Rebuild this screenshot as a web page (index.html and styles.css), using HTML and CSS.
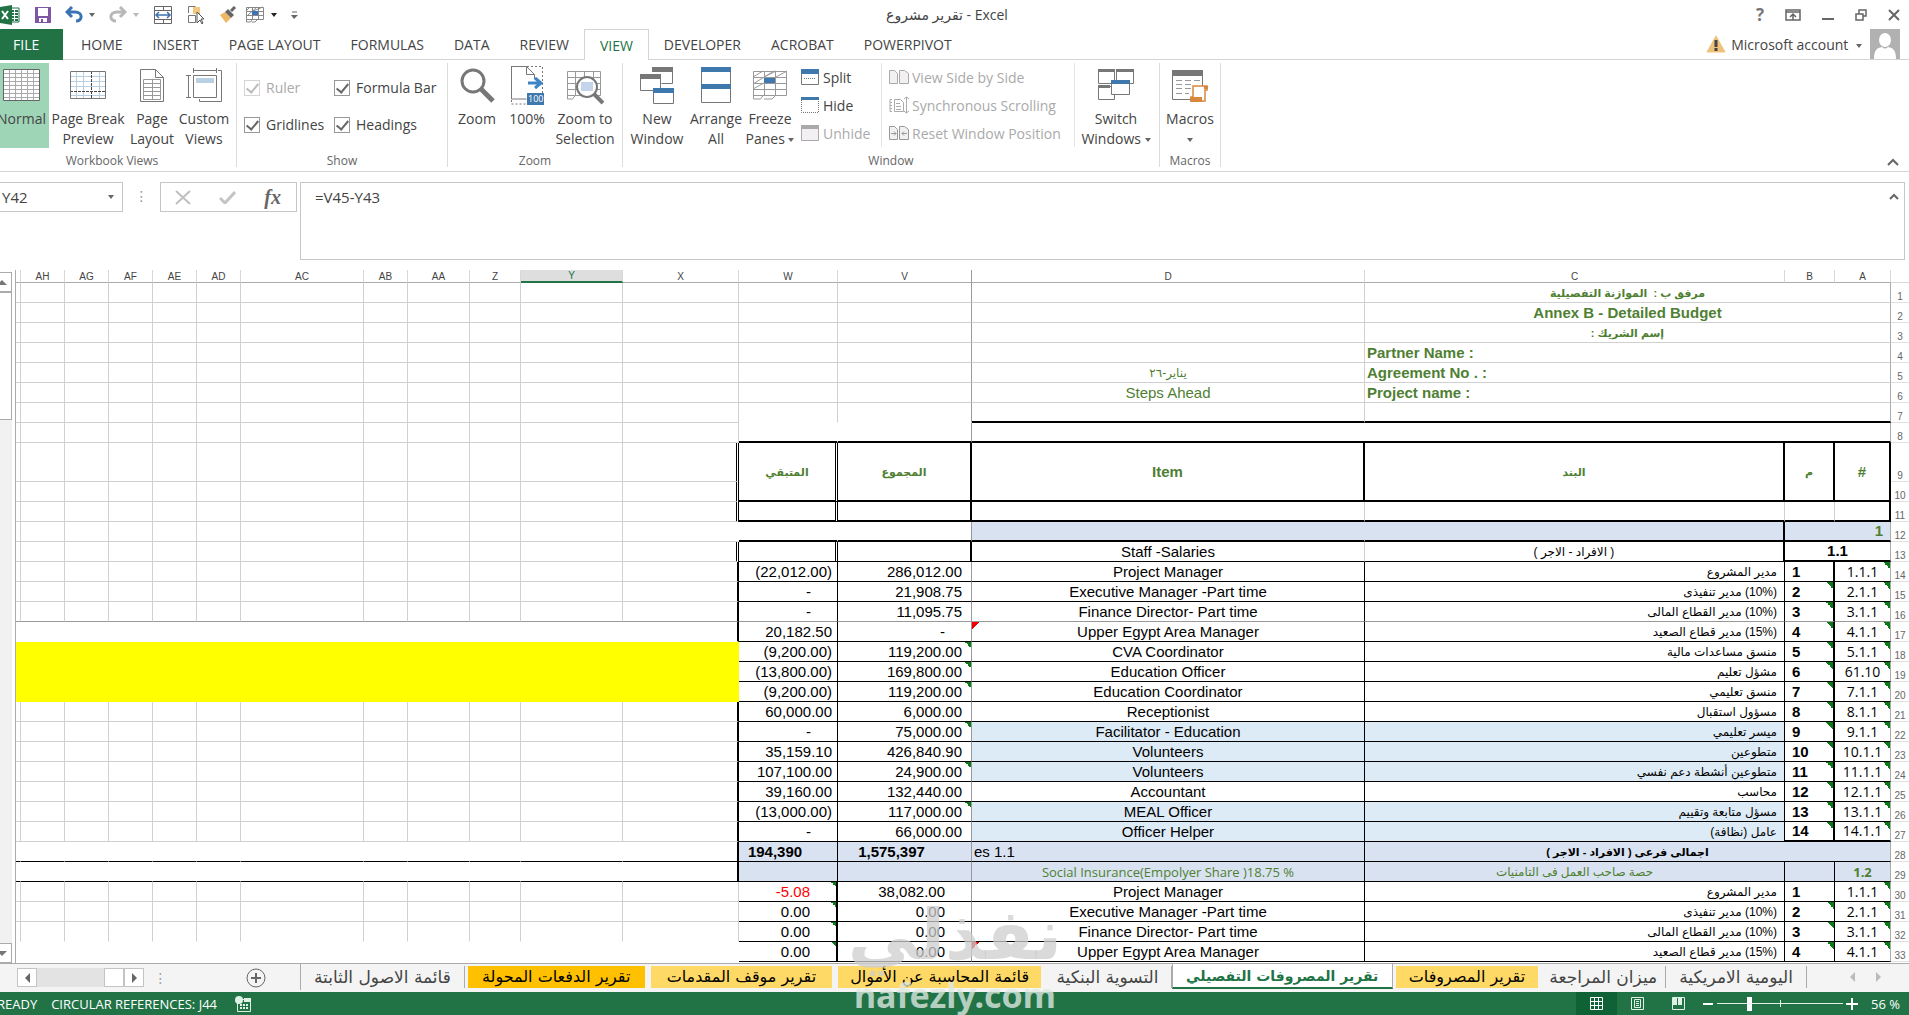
FILE: index.html
```html
<!DOCTYPE html>
<html lang="en">
<head>
  <meta charset="UTF-8" />
  <meta name="viewport" content="width=device-width, initial-scale=1.0"/>
  <title>تقرير مشروع - Excel</title>
  <link rel="stylesheet" href="styles.css">
</head>
<body>
  <header class="titlebar">
    <div class="quick">
      <svg class="app-logo" width="21" height="20" viewBox="0 0 21 20"><path d="M9 3h10v14H9z" fill="#fff" stroke="#217346"/><path d="M12 6h2m1 0h3M12 9h2m1 0h3M12 12h2m1 0h3M12 15h2m1 0h3" stroke="#217346" stroke-width="2"/><path d="M0 2l12-2v20L0 18z" fill="#217346"/><path d="M2 6l6 8M8 6l-6 8" stroke="#fff" stroke-width="2"/></svg>
      <button class="q-btn save" aria-label="Save"><svg width="16" height="16" viewBox="0 0 16 16"><path d="M0 0h16v16H0z" fill="#7d57a4"/><path d="M3 1h10v8H3zM4 11h8v4H8v-3H6v3H4z" fill="#fff"/></svg></button>
      <button class="q-btn undo" aria-label="Undo"><svg width="18" height="17" viewBox="0 0 18 17"><path d="M2 6h8c8 0 8 9 1 9M7 1L2 6l5 5" fill="none" stroke="#3b73b5" stroke-width="3"/></svg><i class="caret"></i></button>
      <button class="q-btn redo" aria-label="Redo"><svg width="18" height="17" viewBox="0 0 18 17"><path d="M16 6H8c-8 0-8 9-1 9M11 1l5 5-5 5" fill="none" stroke="#b8b8b8" stroke-width="3"/></svg><i class="caret light"></i></button>
      <button class="q-btn" aria-label="Merge cells"><svg width="20" height="20" viewBox="0 0 20 20"><path d="M1.500 1.500h17v17h-17zM1.500 5.500h17M1.500 14.500h17M10.500 1v4M10.500 15v4" fill="none" stroke="#666"/><path d="M3 10h14M6 7l-3 3 3 3M14 7l3 3-3 3" fill="none" stroke="#3b73b5" stroke-width="1.500"/></svg></button>
      <button class="q-btn" aria-label="Select objects"><svg width="18" height="20" viewBox="0 0 18 20"><path d="M6 2h7v7H6z" fill="#f3c77d"/><path d="M1.500 8V1.500h7M1.500 10.500h7v7h-7zM10 9h3" fill="none" stroke="#777"/><path d="M10 7v11l3-3 2 4 1-1-2-4h3z" fill="#fff" stroke="#555"/></svg></button>
      <button class="q-btn paint" aria-label="Format painter"><svg width="18" height="18" viewBox="0 0 18 18"><path d="M1 9l5-3 6 6-5 5z" fill="#efb866"/><path d="M6 6l3-3 6 6-3 3z" fill="#666"/><path d="M12 5l4-4" stroke="#666" stroke-width="3"/></svg></button>
      <button class="q-btn" aria-label="Freeze panes"><svg width="20" height="17" viewBox="0 0 20 17"><path d="M1.500 1.500h17v12h-17zM1 5.500h18M1 9.500h18M7.500 1v12M13.500 1v12M1 5l4-4M3 9l9-8M8 5l10-4M1.500 13v3h4l2-3M7 16h3l3-3" fill="none" stroke="#888"/><path d="M7 5h6v4H7z" fill="#3b73b5"/></svg><i class="caret dark"></i></button>
      <button class="q-btn" aria-label="Customize toolbar"><svg width="7" height="8" viewBox="0 0 7 8"><path d="M1 1h5" stroke="#666"/><path d="M0 4h7L3 8z" fill="#666"/></svg></button>
    </div>
    <h1 class="doc-title">تقرير مشروع - Excel</h1>
    <div class="win-btns">
      <button class="help" aria-label="Help">?</button>
      <button aria-label="Ribbon display"><svg width="16" height="12" viewBox="0 0 16 12"><path d="M1 1h14v10H1z M1 3h14M8 11V5M5 8l3-3 3 3" fill="none" stroke="#666" stroke-width="1.500"/></svg></button>
      <button aria-label="Minimize"><svg width="12" height="12" viewBox="0 0 12 12"><path d="M0 10h12" stroke="#666" stroke-width="2"/></svg></button>
      <button aria-label="Restore"><svg width="12" height="12" viewBox="0 0 12 12"><path d="M1 5h7v6H1zM4 5V1h7v6H8" fill="none" stroke="#666" stroke-width="1.500"/></svg></button>
      <button aria-label="Close"><svg width="12" height="12" viewBox="0 0 12 12"><path d="M1 1l10 10M11 1L1 11" stroke="#666" stroke-width="2"/></svg></button>
    </div>
  </header>

  <nav class="tabs">
    <button class="file">FILE</button>
    <button>HOME</button>
    <button>INSERT</button>
    <button>PAGE LAYOUT</button>
    <button>FORMULAS</button>
    <button>DATA</button>
    <button>REVIEW</button>
    <button class="active">VIEW</button>
    <button>DEVELOPER</button>
    <button>ACROBAT</button>
    <button>POWERPIVOT</button>
    <div class="account">
      <svg width="20" height="18" viewBox="0 0 20 18"><path d="M10 1l9 16H1z" fill="#efc27b" stroke="#efc27b" stroke-linejoin="round"/><path d="M10 5v7M10 13v3" stroke="#444" stroke-width="3"/></svg>
      <button>Microsoft account <i class="caret"></i></button>
      <svg class="avatar" width="30" height="30" viewBox="0 0 30 30"><path d="M0 0h30v30H0z" fill="#b1b1b1"/><ellipse cx="15" cy="11" rx="6" ry="7" fill="#fff"/><path d="M4 30c0-9 3-11 8-12 2 2 4 2 6 0 5 1 8 3 8 12z" fill="#fff"/></svg>
    </div>
  </nav>

  <section class="ribbon">
    <div class="group views">
      <div class="items">
        <button class="big one normal"><svg width="38" height="36" viewBox="0 0 38 36"><path d="M.5 2.500h36v31H.5z" fill="#fff"/><path d="M6.500 2v31M12.500 2v31M18.500 2v31M24.500 2v31M30.500 2v31M0 6.500h36M0 10.500h36M0 14.500h36M0 18.500h36M0 22.500h36M0 26.500h36M0 30.500h36" stroke="#aaa"/><path d="M.5 2.500h36v31H.5z" fill="none" stroke="#666"/></svg>Normal</button>
        <button class="big page-break"><svg width="38" height="36" viewBox="0 0 38 36"><path d="M7.500 4v28M14.500 4v28M30.500 4v28M1 9.500h36M1 14.500h36M1 19.500h36M1 28.500h36" stroke="#b9cfe2"/><path d="M22.500 4v28M1 24.500h36" stroke="#444" stroke-dasharray="3 1"/><path d="M1.500 4.500h35v27h-35z" fill="none" stroke="#777"/></svg>Page Break<br>Preview</button>
        <button class="big page-layout"><svg width="28" height="36" viewBox="0 0 28 36"><path d="M2.500 2.500h15l8 8v24h-23zM17.500 2.500v8h8" fill="#fff" stroke="#777"/><path d="M5.500 12.500h17v20h-17zM5 16.500h18M5 20.500h18M5 24.500h18M5 28.500h18M14.500 12v20" fill="none" stroke="#999"/></svg>Page<br>Layout</button>
        <button class="big custom"><svg width="38" height="36" viewBox="0 0 38 36"><path d="M8.500 8.500h23v22h-23zM8.500 1v5M31.500 1v5M8 3.500h24M1 8.500h5M1 30.500h5M3.500 8v22M33 3.500h3.500v31h-22V32" fill="none" stroke="#777"/><path d="M11 11h18v5H11z" fill="#b9cfe2"/></svg>Custom<br>Views</button>
      </div>
      <div class="caption">Workbook Views</div>
    </div>

    <div class="group show">
      <div class="items checks">
        <label class="off"><input type="checkbox" checked disabled>Ruler</label>
        <label><input type="checkbox" checked>Formula Bar</label>
        <label><input type="checkbox" checked>Gridlines</label>
        <label><input type="checkbox" checked>Headings</label>
      </div>
      <div class="caption">Show</div>
    </div>

    <div class="group zoom">
      <div class="items">
        <button class="big one w50"><svg width="36" height="36" viewBox="0 0 36 36"><circle cx="14" cy="14" r="11" fill="none" stroke="#777" stroke-width="3"/><path d="M22 22l12 12" stroke="#777" stroke-width="5"/></svg>Zoom</button>
        <button class="big one w50"><svg width="34" height="40" viewBox="0 0 34 40"><path d="M1.500 1.500h15l8 8V14M16.500 1.500v8h8M1.500 1v33h15" fill="none" stroke="#777"/><path d="M17 1.500h15.500V28M1.500 35v4h15" fill="none" stroke="#777" stroke-dasharray="2 2"/><path d="M18 18h12M25 13l6 5-6 5" fill="none" stroke="#3f85c5" stroke-width="3"/><path d="M17 28h17v12H17z" fill="#3f78ad"/><text x="18" y="37" class="tiny">100</text></svg>100%</button>
        <button class="big w66"><svg width="38" height="36" viewBox="0 0 38 36"><path d="M1.500 4.500h33v24h-33zM1 10.500h34M1 16.500h34M1 22.500h34M9.500 4v24M18.500 4v24M27.500 4v24M1.500 28v4h5l3-4" fill="none" stroke="#999"/><circle cx="21" cy="20" r="10" fill="#fff" stroke="#777" stroke-width="2"/><path d="M15 15h12v9H15z" fill="#c4d5ea"/><path d="M28 27l9 9" stroke="#777" stroke-width="4"/></svg>Zoom to<br>Selection</button>
      </div>
      <div class="caption">Zoom</div>
    </div>

    <div class="group window">
      <div class="items">
        <button class="big w60"><svg width="36" height="40" viewBox="0 0 36 40"><path d="M13.500 4.500h20v14h-11M1.500 11.500h20v14h-20zM14.500 25.500h20v13h-20z" fill="#fff" stroke="#777"/><path d="M13 2h21v5H13zM1 9h21v5H1z" fill="#777"/><path d="M14 23h21v5H14z" fill="#3f78ad"/></svg>New<br>Window</button>
        <button class="big w58"><svg width="30" height="36" viewBox="0 0 30 36"><path d="M.5.5h29v35H.5z" fill="#fff" stroke="#777"/><path d="M0 0h30v5H0zM0 17h30v5H0z" fill="#3f78ad"/></svg>Arrange<br>All</button>
        <button class="big w50"><svg width="36" height="36" viewBox="0 0 36 36"><path d="M1.500 4.500h33v24h-33zM1 10.500h34M1 16.500h34M1 22.500h34M12.500 4v24M23.500 4v24M1 10l10-6M1 17l21-13M1 22l11-6M12 10l12-6M24 10l11-6M1.500 28v4h7l3-4M12 32h8l4-4" fill="none" stroke="#999"/><path d="M12 11h11v5H12z" fill="#3f78ad"/></svg>Freeze<br><span>Panes <i class="caret"></i></span></button>
        <div class="smalls">
          <button><svg width="18" height="16" viewBox="0 0 18 16"><path d="M.5.5h17v15H.5z" fill="#fff" stroke="#777"/><path d="M0 0h18v5H0z" fill="#3f78ad"/><path d="M3 9.500h12" stroke="#777" stroke-dasharray="1 1"/></svg>Split</button>
          <button><svg width="18" height="16" viewBox="0 0 18 16"><path d="M.5 3v12.500h17V3" fill="none" stroke="#777" stroke-dasharray="1 1"/><path d="M0 0h18v3H0z" fill="#3f78ad"/></svg>Hide</button>
          <button disabled><svg width="18" height="16" viewBox="0 0 18 16"><path d="M.5.5h17v15H.5z" fill="#f3f0f3" stroke="#aaa"/><path d="M0 0h18v4H0z" fill="#aaa"/></svg>Unhide</button>
        </div>
        <div class="smalls second">
          <button disabled><svg width="20" height="16" viewBox="0 0 20 16"><path d="M.5 1.500h5l3 3v10h-8zM10.500 1.500h5l4 3v10h-9z" fill="#f3f0f3" stroke="#aaa"/></svg>View Side by Side</button>
          <button disabled><svg width="20" height="18" viewBox="0 0 20 18"><path d="M3 3.500H1v12h2M5.500 3.500h6l3 3v9h-9zM7 7.500h4M7 10.500h5M7 13.500h5M1 6.500h2M1 9.500h2M1 12.500h2M17.500 1v16M15 3l2.500-2L20 3M15 15l2.500 2 2.500-2" fill="none" stroke="#aaa"/></svg>Synchronous Scrolling</button>
          <button disabled><svg width="20" height="16" viewBox="0 0 20 16"><path d="M.5 1.500h5l3 3v10h-8zM10.500 1.500h5l4 3v10h-9zM2 8.500h5M5 6.500l2 2-2 2M18 8.500h-5M15 6.500l-2 2 2 2" fill="#f3f0f3" stroke="#999"/></svg>Reset Window Position</button>
        </div>
        <button class="big w72"><svg width="36" height="36" viewBox="0 0 36 36"><path d="M.5 3.500h16v13H.5zM18.500 3.500h17v13h-17zM.5 19.500h16v13H.5z" fill="#fff" stroke="#777"/><path d="M0 2h17v3H0zM18 2h18v3H18zM0 18h12v3H0z" fill="#777"/><path d="M13.500 14.500h18v13h-18z" fill="#fff" stroke="#777"/><path d="M13 13h19v4H13z" fill="#3f78ad"/></svg>Switch<br><span>Windows <i class="caret"></i></span></button>
      </div>
      <div class="caption">Window</div>
    </div>

    <div class="group macros">
      <div class="items">
        <button class="big w60"><svg width="36" height="36" viewBox="0 0 36 36"><path d="M.5 4.500h30v28H.5z" fill="#fff" stroke="#777"/><path d="M0 3h31v6H0z" fill="#777"/><path d="M4 13.500h6M13 13.500h6M22 13.500h6M4 17.500h6M13 17.500h6M4 21.500h6M13 21.500h6M4 26.500h6M13 26.500h4" stroke="#999"/><path d="M21 19h14v4h-2v11H19v-4h2z" fill="#fff" stroke="#d8883c" stroke-width="1.500"/><path d="M18 30h12v5H18zM32 19h4v3h-4z" fill="#d8883c"/></svg>Macros<br><i class="caret"></i></button>
      </div>
      <div class="caption">Macros</div>
    </div>
    <button class="collapse" aria-label="Collapse ribbon"><svg width="12" height="8" viewBox="0 0 12 8"><path d="M1 7l5-5 5 5" fill="none" stroke="#666" stroke-width="2"/></svg></button>
  </section>

  <section class="formula-bar">
    <div class="name-box"><input type="text" value="Y42" aria-label="Name box"><i class="caret"></i></div>
    <span class="dots">⋮</span>
    <div class="fx-box">
      <button aria-label="Cancel"><svg width="16" height="15" viewBox="0 0 16 15"><path d="M1 1l14 13M15 1L1 14" stroke="#c0c0c0" stroke-width="2"/></svg></button>
      <button aria-label="Enter"><svg width="17" height="13" viewBox="0 0 17 13"><path d="M1 7l5 5L16 1" fill="none" stroke="#c4c4c4" stroke-width="3"/></svg></button>
      <button class="fx" aria-label="Insert function">fx</button>
    </div>
    <div class="formula">
      <input type="text" value="=V45-Y43" aria-label="Formula">
      <svg width="10" height="7" viewBox="0 0 10 7"><path d="M1 6l4-4 4 4" fill="none" stroke="#666" stroke-width="2"/></svg>
    </div>
  </section>

  <main class="sheet">
    <div class="vscroll">
      <button aria-label="Scroll up"><i class="tri up"></i></button>
      <div class="thumb"></div>
      <div class="track"></div>
      <button aria-label="Scroll down"><i class="tri down"></i></button>
    </div>
    <div class="grid">
      <table dir="rtl">
        <colgroup>
          <col class="c-num"><col class="c-a"><col class="c-b"><col class="c-c"><col class="c-d">
          <col class="c-v"><col class="c-w"><col><col class="c-y"><col class="c-z"><col class="c-aa">
          <col class="c-s"><col class="c-ac"><col class="c-s"><col class="c-s"><col class="c-s">
          <col class="c-s"><col class="c-s"><col class="c-edge">
        </colgroup>
        <thead>
          <tr>
            <th class="corner"></th><th>A</th><th>B</th><th>C</th><th>D</th><th class="freeze-v">V</th><th>W</th>
            <th>X</th><th class="sel">Y</th><th>Z</th><th>AA</th><th>AB</th><th>AC</th><th>AD</th><th>AE</th><th>AF</th><th>AG</th><th>AH</th><th></th>
          </tr>
        </thead>
        <tbody id="rows"></tbody>
      </table>
    </div>
  </main>

  <footer class="sheet-tabs">
    <div class="hscroll">
      <button aria-label="Scroll left"><i class="tri left"></i></button>
      <div class="track"></div>
      <div class="thumb"></div>
      <button aria-label="Scroll right"><i class="tri right"></i></button>
    </div>
    <span class="dots">⋮</span>
    <button class="add" aria-label="New sheet"><svg width="22" height="20" viewBox="0 0 22 20"><circle cx="11" cy="10" r="9" fill="none" stroke="#666"/><path d="M6 10h10M11 5v10" stroke="#666" stroke-width="2"/></svg></button>
    <div class="tab-list">
      <button>قائمة الاصول الثابتة</button>
      <button class="orange">تقرير الدفعات المحولة</button>
      <button class="yellow">تقرير موقف المقدمات</button>
      <button class="yellow">قائمة المحاسبة عن الأموال</button>
      <button>التسوية البنكية</button>
      <button class="current">تقرير المصروفات التفصيلي</button>
      <button class="yellow">تقرير المصروفات</button>
      <button>ميزان المراجعة</button>
      <button>اليومية الامريكية</button>
    </div>
    <div class="tab-nav">
      <button aria-label="Previous sheet"><i class="tri left"></i></button>
      <button aria-label="Next sheet"><i class="tri right"></i></button>
    </div>
  </footer>

  <div class="status">
    <span class="ready">READY</span>
    <span class="circular">CIRCULAR REFERENCES: J44</span>
    <svg width="17" height="16" viewBox="0 0 17 16"><path d="M2.500 3.500h13v12h-13z" fill="none" stroke="#dff0e5"/><path d="M9 2h7v4H9z" fill="#dff0e5"/><circle cx="4" cy="4" r="4" fill="#dff0e5"/><path d="M5 9h8M5 12h8" stroke="#dff0e5" stroke-width="2" stroke-dasharray="2 1"/></svg>
    <div class="status-right">
      <button class="on" aria-label="Normal view"><svg width="14" height="14" viewBox="0 0 14 14"><path d="M.5.5h12v12H.5zM4.500 0v13M8.500 0v13M0 4.500h13M0 8.500h13" fill="none" stroke="#fff"/></svg></button>
      <button aria-label="Page layout view"><svg width="14" height="14" viewBox="0 0 14 14"><path d="M.5.5h12v12H.5zM3.500 2.500h6v8h-6zM5 4.500h3M5 6.500h3M5 8.500h3" fill="none" stroke="#dff0e5"/></svg></button>
      <button aria-label="Page break view"><svg width="14" height="14" viewBox="0 0 14 14"><path d="M.5.5h12v12H.5z" fill="none" stroke="#dff0e5"/><path d="M1 1h4v7H1zM6 1h4v7H6z" fill="#dff0e5"/></svg></button>
      <button class="step" aria-label="Zoom out"><svg width="10" height="12" viewBox="0 0 10 12"><path d="M0 6h10" stroke="#fff" stroke-width="2"/></svg></button>
      <input type="range" min="0" max="100" value="25" aria-label="Zoom">
      <button class="step" aria-label="Zoom in"><svg width="12" height="12" viewBox="0 0 12 12"><path d="M0 6h12M6 0v12" stroke="#fff" stroke-width="2"/></svg></button>
      <span class="percent">56 %</span>
    </div>
  </div>

  <div class="watermark"><b>نفذلي</b><span>nafezly.com</span></div>

  <script src="script.js"></script>
</body>
</html>
```
FILE: styles.css
```css
* {
  box-sizing: border-box;
}

body {
  margin: 0;
  height: 100vh;
  display: flex;
  flex-direction: column;
  overflow: hidden;
  position: relative;
  background: #fff;
  color: #444;
  font-family: "Open Sans", "Noto Sans", "DejaVu Sans", sans-serif;
  font-size: 14px;
}

button {
  font: inherit;
  color: inherit;
  background: none;
  border: none;
  padding: 0;
  white-space: nowrap;
}

input {
  font: inherit;
  color: inherit;
}

svg {
  display: block;
  flex: none;
}

.caret {
  display: inline-block;
  border: 3px solid transparent;
  border-top: 4px solid #666;
  border-bottom: 0;
  vertical-align: middle;
}

.caret.light { border-top-color: #bbb; }
.caret.dark { border-top-color: #222; }

/* title bar */
.titlebar {
  display: grid;
  grid-template-columns: 1fr auto 1fr;
  align-items: center;
  height: 29px;
  padding-right: 9px;
}

.quick {
  display: flex;
  align-items: center;
  height: 24px;
  gap: 14px;
}

.q-btn {
  display: flex;
  align-items: center;
  gap: 6px;
}

.paint { margin-right: -6px; }

.doc-title {
  margin: 0;
  padding-right: 6px;
  font-size: 14px;
  line-height: 26px;
  font-weight: normal;
}

.win-btns {
  display: flex;
  justify-content: flex-end;
  align-items: center;
  height: 26px;
  gap: 21px;
}

.help {
  font-size: 17px;
  line-height: 20px;
  font-weight: bold;
  color: #777;
}

/* ribbon tabs */
.tabs {
  display: flex;
  height: 31px;
  flex: none;
  border-bottom: 1px solid #d4d4d4;
}

.tabs > button {
  padding: 0 15px;
  height: 31px;
}

.tabs > .file {
  width: 63px;
  padding: 0 24px 0 13px;
  margin-right: 3px;
  background: #217346;
  color: #fff;
}

.tabs > .active {
  border: 1px solid #d4d4d4;
  border-bottom: none;
  background: #fff;
  color: #217346;
}

.account {
  display: flex;
  align-items: center;
  gap: 5px;
  margin-left: auto;
  padding-right: 9px;
}

.account .caret { margin: 0 3px 0 4px; }

/* ribbon */
.ribbon {
  display: flex;
  flex: none;
  height: 112px;
  border-bottom: 1px solid #d4d4d4;
  padding-top: 3px;
}

.group {
  display: flex;
  flex-direction: column;
  height: 104px;
  border-right: 1px solid #dcdcdc;
}

.items {
  display: flex;
  height: 89px;
  flex: none;
}

.caption {
  font-size: 12px;
  line-height: 18px;
  text-align: center;
  color: #666;
}

.views { width: 237px; }
.views .caption { padding-right: 12px; }
.show { width: 211px; }
.zoom { width: 175px; padding-left: 4px; }
.zoom .caption, .window .caption { padding-right: 4px; }
.window { width: 537px; padding-left: 4px; }
.macros { width: 61px; }

.big {
  display: block;
  height: 85px;
  line-height: 20px;
  text-align: center;
}

.big svg {
  height: 40px;
  margin: 2px auto 4px;
}

.big.one { padding-bottom: 20px; }

.normal {
  width: 55px;
  margin-left: -6px;
  background: #9fd5b7;
}

.page-break { width: 78px; }
.page-layout { width: 50px; }
.custom { width: 54px; }
.w50 { width: 50px; }
.w58 { width: 58px; }
.w60 { width: 60px; }
.w66 { width: 66px; }
.w72 { width: 72px; }

.tiny {
  font-size: 9px;
  fill: #fff;
}

.checks {
  display: grid;
  grid-template-columns: 90px 1fr;
  grid-auto-rows: 37px;
  padding: 6px 0 0 7px;
}

.checks label {
  display: flex;
  align-items: center;
  gap: 6px;
  white-space: nowrap;
}

.checks .off { color: #aaa; }

.checks input {
  appearance: none;
  width: 16px;
  height: 16px;
  margin: 0;
  border: 1px solid #999;
  display: grid;
  place-items: center;
}

.checks input:checked::after {
  content: "";
  width: 5px;
  height: 10px;
  border: solid #666;
  border-width: 0 2px 2px 0;
  transform: rotate(40deg);
  margin-bottom: 3px;
}

.checks input:disabled { border-color: #d4d4d4; }
.checks input:disabled::after { border-color: #bbb; }

.smalls {
  display: flex;
  flex-direction: column;
  height: 84px;
  width: 86px;
  padding-left: 6px;
}

.smalls button {
  display: flex;
  align-items: center;
  gap: 4px;
  height: 28px;
}

.smalls button:disabled { color: #aaa; }

.smalls.second {
  width: 194px;
  padding-left: 7px;
  border-left: 1px solid #e4e4e4;
  border-right: 1px solid #e4e4e4;
  margin-right: 5px;
}

.smalls.second button { gap: 3px; }

.collapse {
  margin: auto 10px 5px auto;
}

/* formula bar */
.formula-bar {
  display: flex;
  flex: none;
  align-items: flex-start;
  height: 98px;
  padding: 10px 4px 0 0;
}

.name-box, .fx-box, .formula {
  border: 1px solid #c6c6c6;
  display: flex;
  align-items: center;
}

.name-box {
  width: 123px;
  height: 30px;
  border-left: none;
  padding-right: 8px;
}

.name-box input, .formula input {
  border: none;
  outline: none;
  padding: 0;
  min-width: 0;
  flex: 1;
  background: none;
  font-size: 15px;
  line-height: 20px;
}

.name-box input { margin-left: 2px; }

.dots {
  width: 37px;
  line-height: 28px;
  text-align: center;
  color: #999;
}

.fx-box {
  width: 137px;
  height: 30px;
  justify-content: space-between;
  padding: 0 15px 0 14px;
  margin-right: 3px;
}

.fx {
  font: italic bold 20px "Liberation Serif", serif;
  line-height: 20px;
  color: #666;
}

.formula {
  flex: 1;
  height: 78px;
  align-items: flex-start;
  padding: 4px 5px 0 14px;
}

.formula svg { margin-top: 6px; }

/* sheet */
.sheet {
  flex: 1;
  min-height: 0;
  display: flex;
  border-bottom: 1px solid #ababab;
}

.vscroll {
  display: flex;
  flex-direction: column;
  width: 12px;
  margin: 2px 3px 0 0;
  background: #f1f1f1;
  flex: none;
}

.vscroll button, .vscroll .thumb {
  border: 1px solid #ababab;
  border-left: none;
  background: #fff;
}

.vscroll button {
  height: 20px;
  display: flex;
  align-items: center;
}

.vscroll .thumb { height: 128px; }
.vscroll .track { flex: 1; }

.tri {
  border: 5px solid transparent;
}

.tri.up { border-top: 0; border-bottom-color: #777; margin-left: -3px; }
.tri.down { border-bottom: 0; border-top-color: #777; margin-left: -3px; }
.tri.left { border-left: 0; border-right-color: #666; }
.tri.right { border-right: 0; border-left-color: #666; }

.grid {
  flex: 1;
  min-width: 0;
  overflow: hidden;
  border-left: 1px solid #ababab;
}

table {
  width: 100%;
  table-layout: fixed;
  border-collapse: separate;
  border-spacing: 0;
  font-family: "Liberation Sans", "DejaVu Sans", sans-serif;
  font-size: 15px;
  line-height: 18px;
  color: #000;
}

.c-num { width: 18px; }
.c-a { width: 56px; }
.c-b { width: 50px; }
.c-c { width: 420px; }
.c-d { width: 393px; }
.c-v { width: 134px; }
.c-w { width: 99px; }
.c-y { width: 102px; }
.c-z { width: 51px; }
.c-aa { width: 62px; }
.c-ac { width: 123px; }
.c-s { width: 44px; }
.c-edge { width: 5px; }

thead th {
  height: 13px;
  padding: 0;
  font-size: 10px;
  line-height: 11px;
  font-weight: normal;
  color: #444;
  border-right: 1px solid #d8d8d8;
  border-bottom: 1px solid #ababab;
}

thead .sel {
  background: #dedede;
  color: #217346;
  border-bottom: 2px solid #217346;
}

thead .corner {
  border-right: none;
  border-bottom-color: #d8d8d8;
}

td, .row-no {
  height: 20px;
  padding: 0;
  overflow: hidden;
  white-space: nowrap;
  border-right: 1px solid #d0d0d0;
  border-bottom: 1px solid #d0d0d0;
}

.tall > * { height: 39px; }

.row-no {
  font-size: 10px;
  line-height: 11px;
  font-weight: normal;
  color: #666;
  text-align: center;
  vertical-align: bottom;
  border-right: none;
  border-color: #e0e0e0;
}

td.a { border-right-color: #ababab; }
td.v, .freeze-v { border-right: 1px solid #999; }

td.plain { border-color: transparent; }
td.no-b { border-bottom-color: transparent; }
td.no-r { border-right-color: transparent; }
td.b1 { border-bottom: 1px solid #000; }
td.b2 { border-bottom: 2px solid #000; }
td.r1 { border-right: 1px solid #000; }
td.r2 { border-right: 2px solid #000; }
td.dbl { border-right: 3px double #000; }
td.cut { border-bottom: 1px solid #999; }
td.yellow-fill { background: #ff0; border-color: #ff0; }

.green { color: #4f7f33; }
.bold { font-weight: bold; }
.red { color: #f00; }
.center { text-align: center; }
.ltr { direction: ltr; }
td.left { text-align: left; padding-left: 2px; }
td.ar { font-size: 12px; }
td.ar.bold { font-size: 11px; }
td.item { text-align: right; padding-right: 7px; }
td.num { direction: ltr; text-align: right; padding-right: 9px; }
td.w.num { padding-right: 5px; }
td.num.mid { padding-right: 26px; }
td.num.sum { text-align: center; padding-right: 26px; }
td.code { font-family: "Open Sans", sans-serif; font-size: 14px; text-align: center; }
td.no { font-weight: bold; text-align: left; padding-left: 7px; }
td.edge-no { text-align: right; padding-right: 7px; }

.head { background: #d9e2f0; }
.shade { background: #ddebf7; }
.social { font-family: "Open Sans", "DejaVu Sans", sans-serif; font-size: 13px; }
td.social.ar { font-size: 12px; }

/* cell error and comment marks */
td.flag {
  background-image: linear-gradient(to bottom left, #0a7a16 50%, transparent 50%);
  background-size: 7px 7px;
  background-position: top right;
  background-repeat: no-repeat;
}

td.note {
  background-image: linear-gradient(to bottom right, #e00 50%, transparent 50%);
  background-size: 7px 7px;
  background-position: top left;
  background-repeat: no-repeat;
}

/* sheet tabs */
.sheet-tabs {
  display: flex;
  flex: none;
  height: 28px;
  align-items: flex-start;
  background: #f3f4f3;
}

.hscroll {
  display: flex;
  width: 127px;
  height: 19px;
  margin: 4px 0 0 17px;
  background: #e3e3e3;
}

.hscroll button, .hscroll .thumb {
  width: 20px;
  border: 1px solid #c4c4c4;
  background: #fff;
  display: grid;
  place-items: center;
}

.hscroll .track { flex: 1; }
.sheet-tabs .dots { width: 33px; }
.add { margin: 4px 33px 0 68px; }

.tab-list {
  flex: 1;
  display: grid;
  grid-template-columns: 164fr 183fr 188fr 209fr 128fr 221fr 149fr 125fr 141fr;
  border-left: 1px solid #ababab;
}

.tab-list button {
  height: 22px;
  margin: 2px 0;
  padding: 0;
  line-height: 18px;
  border-right: 1px solid #ababab;
  font-family: "DejaVu Sans", sans-serif;
  font-size: 17px;
  direction: rtl;
}

.tab-list .orange, .tab-list .yellow {
  border: 0 solid #f3f4f3;
  border-width: 0 3px;
  color: #000;
  font-size: 16px;
}

.tab-list .orange { background: #ffc000; }
.tab-list .yellow { background: #ffd966; }

.tab-list .current {
  height: 25px;
  margin: 0;
  background: #fff;
  border: 1px solid #ababab;
  border-width: 0 1px;
  border-bottom: 2px solid #217346;
  color: #217346;
  font-weight: bold;
  font-size: 14px;
}

.tab-nav {
  display: flex;
  gap: 21px;
  width: 102px;
  padding: 8px 0 0 43px;
}

.tab-nav .tri { display: block; opacity: 0.4; }

/* status bar */
.status {
  display: flex;
  flex: none;
  align-items: center;
  height: 23px;
  background: #217346;
  color: #fff;
  font-size: 12px;
  line-height: 20px;
}

.ready, .circular { font-size: 13px; }
.ready { margin: 0 14px 0 -3px; }
.circular { margin-right: 18px; }

.status-right {
  display: flex;
  align-items: center;
  height: 23px;
  margin-left: auto;
  padding-right: 9px;
}

.status-right button {
  width: 41px;
  height: 23px;
  display: grid;
  place-items: center;
}

.status-right .on { background: #0e6235; }
.status-right .step { width: 18px; }

.status-right input {
  appearance: none;
  width: 126px;
  height: 14px;
  margin: 0;
  background:
    linear-gradient(#dff0e5, #dff0e5) center / 100% 1px no-repeat,
    linear-gradient(#dff0e5, #dff0e5) center / 1px 7px no-repeat;
}

.status-right input::-webkit-slider-thumb {
  appearance: none;
  width: 5px;
  height: 14px;
  background: #fff;
}

.percent { margin-left: 10px; font-size: 13px; }

/* watermark over the sheet */
.watermark {
  position: absolute;
  left: 44%;
  bottom: 0;
  width: 230px;
  text-align: center;
  pointer-events: none;
  font-weight: bold;
  font-family: "DejaVu Sans", sans-serif;
}

.watermark b {
  display: block;
  font-size: 70px;
  line-height: 80px;
  color: rgba(205, 205, 205, 0.75);
}

.watermark span {
  display: block;
  font: bold 34px "Noto Sans", sans-serif;
  line-height: 40px;
  color: rgba(222, 232, 225, 0.8);
}
```
FILE: script.js
```js
// number, code, arabic item, english item, total, remaining, shaded row, error mark on total
const staff = [
  [1, "1.1.1", "مدير المشروع", "Project Manager", "286,012.00", "(22,012.00)", 0, 0],
  [2, "2.1.1", "(10%) مدير تنفيذى", "Executive Manager -Part time", "21,908.75", "-", 0, 0],
  [3, "3.1.1", "(10%) مدير القطاع المالى", "Finance Director- Part time", "11,095.75", "-", 0, 0],
  [4, "4.1.1", "(15%) مدير قطاع الصعيد", "Upper Egypt Area Manager", "-", "20,182.50", 0, 0],
  [5, "5.1.1", "منسق مساعدات مالية", "CVA Coordinator", "119,200.00", "(9,200.00)", 0, 1],
  [6, "61.10", "مشؤل تعليم", "Education Officer", "169,800.00", "(13,800.00)", 0, 1],
  [7, "7.1.1", "منسق تعليمي", "Education Coordinator", "119,200.00", "(9,200.00)", 0, 1],
  [8, "8.1.1", "مسؤول استقبال", "Receptionist", "6,000.00", "60,000.00", 0, 0],
  [9, "9.1.1", "ميسر تعليمي", "Facilitator - Education", "75,000.00", "-", 1, 1],
  [10, "10.1.1", "متطوعين", "Volunteers", "426,840.90", "35,159.10", 1, 0],
  [11, "11.1.1", "متطوعين أنشطة دعم نفسي", "Volunteers", "24,900.00", "107,100.00", 1, 1],
  [12, "12.1.1", "محاسب", "Accountant", "132,440.00", "39,160.00", 0, 0],
  [13, "13.1.1", "مسؤل متابعة وتقييم", "MEAL Officer", "117,000.00", "(13,000.00)", 1, 1],
  [14, "14.1.1", "عامل (نظافة)", "Officer Helper", "66,000.00", "-", 1, 0]
];

const insurance = [
  ["38,082.00", "-5.08"],
  ["0.00", "0.00"],
  ["0.00", "0.00"],
  ["0.00", "0.00"]
];

const EMPTY_COLS = 12;
let rowNumber = 0;
let html = "";

function cell(cls, text = "", attrs = "") {
  return `<td class="${cls}" ${attrs}>${text}</td>`;
}

// columns X to AH; the first one can carry the edge of the report
function blanks(cls = "", first = "") {
  let out = cell(`${cls} ${first}`);
  for (let i = 1; i < EMPTY_COLS; i++) out += cell(cls);
  return out;
}

function row(cells, cls = "") {
  rowNumber++;
  html += `<tr class="${cls}"><th class="row-no">${rowNumber}</th>${cells}</tr>`;
}

function infoRow(text, cls, dText = "", dCls = "") {
  row(cell("a " + cls, text, 'colspan="3"') + cell("center green " + dCls, dText) + cell("v") + cell("") + blanks());
}

infoRow("مرفق ب :&nbsp; الموازنة التفصيلية", "center green bold ar");
infoRow("Annex B - Detailed Budget", "center green bold ltr");
infoRow("إسم الشريك :", "center green bold ar");
infoRow("Partner Name :", "left green bold ltr");
infoRow("Agreement No . :", "left green bold ltr", "يناير-٢٦", "ar");
infoRow("Project name :", "left green bold ltr", "Steps Ahead");
row(cell("a b2", "", 'colspan="3"') + cell("b2") + cell("v no-b") + cell("no-b") + blanks());
row(cell("a b2", "", 'colspan="4"') + cell("v b2") + cell("no-r b2") + blanks());

// report heading
row(
  cell("a r2 b2 center green bold", "#", 'rowspan="2"') +
  cell("r2 b2 center green bold ar", "م", 'rowspan="2"') +
  cell("r2 b2 center green bold ar", "البند", 'rowspan="2"') +
  cell("r2 b2 center green bold", "Item", 'rowspan="2"') +
  cell("v r2 b2 center green bold ar", "المجموع", 'rowspan="2"') +
  cell("dbl b2 center green bold ar", "المتبقي", 'rowspan="2"') +
  blanks("", "dbl"), "tall");
row(blanks("", "dbl"));
row(cell("a r2 b2") + cell("b2") + cell("b2") + cell("b2") + cell("v r2 b2") + cell("dbl b2") + blanks("", "dbl"));
row(
  cell("a head b2 green bold edge-no", "1", 'colspan="2"') +
  cell("head r2 b2") + cell("head b2 no-r") + cell("v b2") + cell("b2 no-r") + blanks("", "no-r"));
row(
  cell("a b2 center bold", "1.1", 'colspan="2"') +
  cell("r2 b1 center ar", "( الافراد - الاجر )") +
  cell("b1 center ltr", "Staff -Salaries") + cell("v r2 b1") + cell("dbl b1") + blanks("", "dbl"));

staff.forEach(([no, code, ar, en, total, left, shaded, flag], i) => {
  const shade = shaded ? "shade" : "";
  const line = i === 2 ? "cut" : "b1";
  const last = i === 13 ? "b2" : line;
  let side = blanks("", "r2");
  if (i === 2) side = blanks("cut", "r2");
  if (i === 3) side = blanks("plain", "r2");
  if (i >= 4 && i <= 6) side = blanks("yellow-fill", "r2");
  row(
    cell(`a code flag ${last}`, code) +
    cell(`no r2 ${last} ${i ? "flag" : ""}`, no) +
    cell(`item ar r1 ${shade} ${line}`, ar) +
    cell(`center ltr r1 ${shade} ${line} ${i === 3 ? "note" : ""}`, en) +
    cell(`v num ${line} ${total === "-" ? "mid" : ""} ${flag ? "flag" : ""}`, total) +
    cell(`w num r1 ${line} ${left === "-" ? "mid" : ""}`, left) + side);
});

row(
  cell("a head b1 center bold ar", "اجمالى فرعى ( الافراد - الاجر )", 'colspan="3"') +
  cell("head r1 b1 left ltr", "es 1.1") +
  cell("v head b1 num sum bold", "1,575,397") +
  cell("w head r1 b1 num sum bold", "194,390") + blanks("b1 no-r", "r2"));
row(
  cell("a head b1 center green bold social", "1.2") + cell("head r1 b1") +
  cell("head r1 b1 center green social ar", "حصة صاحب العمل فى التامنيات") +
  cell("head r1 b1 center green social ltr", "Social Insurance(Empolyer Share )18.75 %") +
  cell("v head b1") + cell("head r1 b1") + blanks("b1 no-r", "r2"));

insurance.forEach(([total, left], i) => {
  const [no, code, ar, en] = staff[i];
  row(
    cell("a code flag b1", code) + cell(`no r1 b1 ${i ? "flag" : ""}`, no) +
    cell("item ar r1 b1", ar) + cell(`center ltr r1 b1 ${i === 3 ? "note" : ""}`, en) +
    cell("v num mid b1", total) +
    cell(`w num mid r2 b1 flag ${i ? "" : "red"}`, left) + blanks(i === 3 ? "plain" : i === 2 ? "no-b" : ""));
});

document.getElementById("rows").innerHTML = html;
```
